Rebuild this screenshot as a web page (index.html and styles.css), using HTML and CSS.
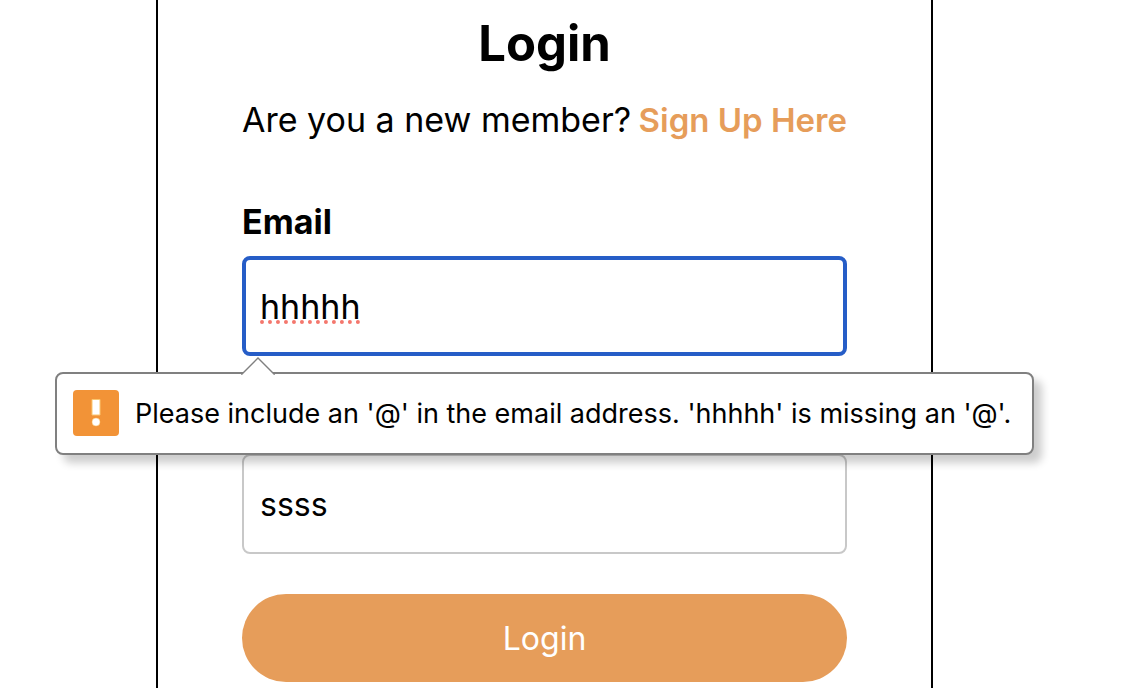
FILE: index.html
```html
<!DOCTYPE html>
<html lang="en">
<head>
<meta charset="utf-8">
<meta name="viewport" content="width=device-width, initial-scale=1">
<title>Login</title>
<link rel="stylesheet" href="styles.css">
</head>
<body>
<main class="page">
  <section class="card">
    <h1 class="title">Login</h1>
    <p class="intro"><span>Are you a new member?</span> <a class="signup" href="#signup">Sign Up Here</a></p>
    <form class="form" novalidate>
      <div class="field">
        <label class="label" for="email">Email</label>
        <input class="input input-active" id="email" type="text" inputmode="email" value="hhhhh" spellcheck="false" aria-describedby="email-error">
        <div class="bubble" id="email-error" role="alert">
          <svg class="bubble-arrow" viewBox="0 0 34 18" aria-hidden="true"><path d="M0 18L1 17 17 1 33 17 34 18z" fill="#fff"/><path d="M0 17H1L17 1 33 17H34" fill="none" stroke="#808080" stroke-width="1.4"/></svg>
          <svg class="bubble-icon" viewBox="0 0 46 46" aria-hidden="true"><rect width="46" height="46" rx="4" fill="#f29337"/><path d="M19 9.500h8v15.500h-8z" fill="#fff" stroke="#fbc66f"/><circle cx="23" cy="32" r="4" fill="#fff" stroke="#fbc66f" stroke-width=".5"/></svg>
          <span class="bubble-text">Please include an '@' in the email address. 'hhhhh' is missing an '@'.</span>
        </div>
      </div>
      <input class="input" id="password" type="text" value="ssss" spellcheck="false" aria-label="Password">
      <button class="submit" type="submit">Login</button>
    </form>
  </section>
</main>
</body>
</html>
```
FILE: styles.css
```css
* { box-sizing: border-box; }
body {
  margin: 0;
  background: #fff;
  color: #000;
  font-family: Inter, "Liberation Sans", sans-serif;
  font-size: 32px;
  overflow: hidden;
}
.page {
  display: flex;
  justify-content: center;
  min-height: 100vh;
  padding-right: 35px;
}
.card {
  width: 100%;
  max-width: 777px;
  padding: 12px 84px 6px;
  border: solid #000;
  border-width: 0 2px;
}
.title {
  margin: 0;
  font-size: 49px;
  line-height: 64px;
  font-weight: 700;
  text-align: center;
}
.intro {
  display: flex;
  justify-content: space-between;
  margin: 20px 0 0;
  font-size: 34px;
  line-height: 48px;
  white-space: nowrap;
}
.signup {
  color: #e69d5a;
  font-size: 33px;
  font-weight: 600;
  text-decoration: none;
}
.form {
  display: flex;
  flex-direction: column;
  margin-top: 54px;
}
.field {
  position: relative;
  display: flex;
  flex-direction: column;
  gap: 10px;
  margin-bottom: 98px;
}
.label {
  font-size: 34px;
  line-height: 48px;
  font-weight: 700;
}
.input {
  width: 100%;
  height: 100px;
  padding: 0 16px;
  border: 2px solid #c8c8c8;
  border-radius: 8px;
  outline: 0;
  background: #fff;
  color: #000;
  font: inherit;
}
.input-active {
  padding: 0 14px;
  border: 4px solid #265dc7;
  font-size: 34px;
  text-decoration: underline dotted #f4776d 4px;
  text-underline-offset: 2px;
  text-decoration-skip-ink: none;
}
.submit {
  height: 88px;
  margin-top: 40px;
  border: 0;
  border-radius: 44px;
  background: #e69d5a;
  color: #fff;
  font: inherit;
}
.bubble {
  position: absolute;
  z-index: 1;
  top: calc(100% + 16px);
  left: -187px;
  right: -187px;
  display: flex;
  align-items: flex-start;
  gap: 16px;
  padding: 16px;
  border: 2px solid #808080;
  border-radius: 8px;
  background: #fff;
  box-shadow: 8px 8px 8px rgba(0, 0, 0, 0.2);
  font-size: 27px;
  line-height: 47px;
  white-space: nowrap;
}
.bubble-arrow {
  position: absolute;
  top: -17px;
  left: 184px;
  width: 34px;
  height: 18px;
}
.bubble-icon {
  flex: none;
  width: 46px;
  height: 46px;
}
```
